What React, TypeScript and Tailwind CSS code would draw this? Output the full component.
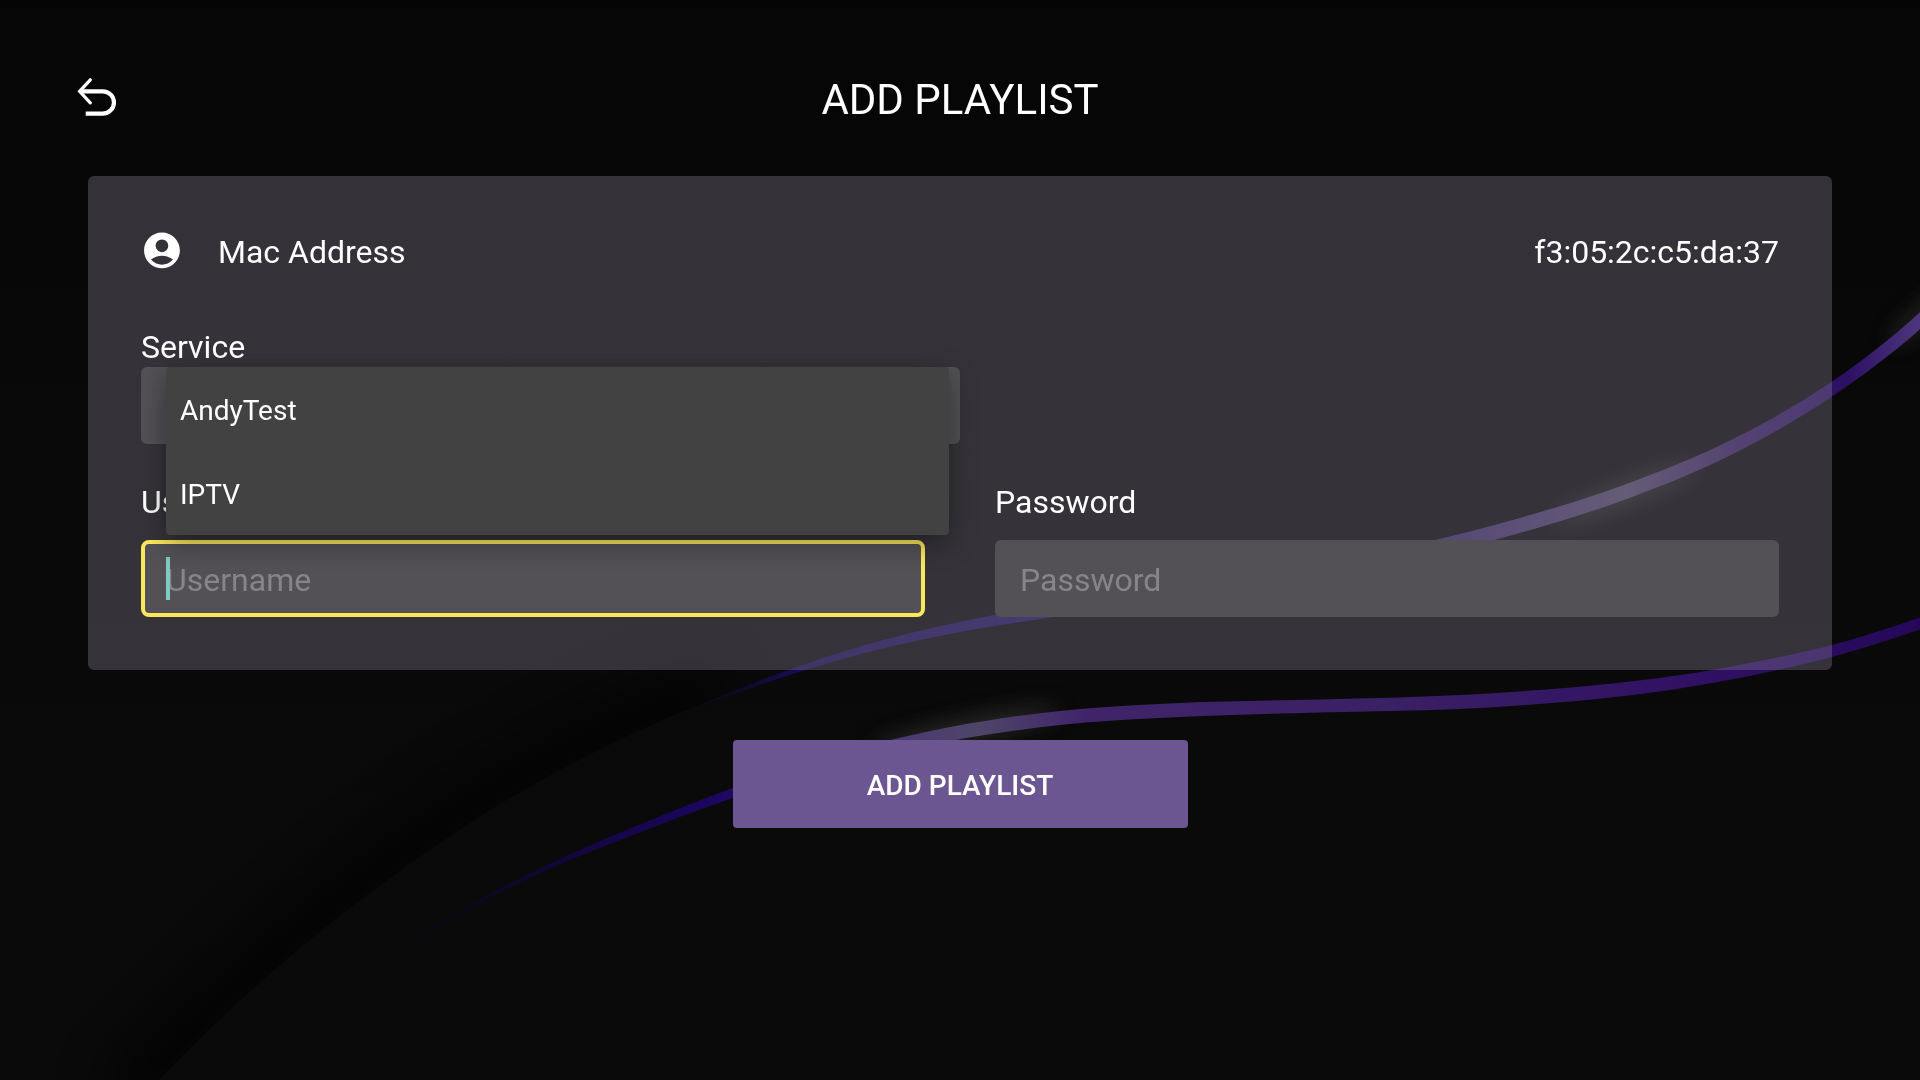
import React, { useState } from 'react';

const SERVICES = ['AndyTest', 'IPTV'];

// x, y of the centre line and the vertical thickness there
type RibbonPoint = [number, number, number];

const UPPER_RIBBON: RibbonPoint[] = [
  [690, 709, 1],
  [779, 676, 5],
  [865, 649, 8],
  [950, 629, 10],
  [1040, 613, 12],
  [1170, 595, 13],
  [1310, 573, 14],
  [1420, 551, 15],
  [1525, 524, 15],
  [1628, 491, 15],
  [1732, 447, 15],
  [1832, 389, 15],
  [1925, 316, 17],
  [2005, 228, 17],
];

const LOWER_RIBBON: RibbonPoint[] = [
  [377, 965, 1],
  [457, 914, 3],
  [546, 868, 5],
  [636, 830, 8],
  [733, 793, 10],
  [830, 762, 12],
  [945, 735, 14],
  [1060, 718, 14],
  [1180, 710, 14],
  [1320, 706, 13],
  [1460, 702, 14],
  [1597, 692, 14],
  [1715, 676, 13],
  [1832, 651, 12],
  [1925, 622, 12],
];

const smooth = (pts: number[][]) =>
  pts
    .slice(1)
    .map((p, i) => {
      const before = pts[i - 1] || pts[i];
      const from = pts[i];
      const after = pts[i + 2] || p;
      const c1 = [from[0] + (p[0] - before[0]) / 6, from[1] + (p[1] - before[1]) / 6];
      const c2 = [p[0] - (after[0] - from[0]) / 6, p[1] - (after[1] - from[1]) / 6];
      return `C${c1.join(' ')} ${c2.join(' ')} ${p.join(' ')}`;
    })
    .join('');

const ribbon = (points: RibbonPoint[]) => {
  const top = points.map(([x, y, w]) => [x, y - w / 2]);
  const bottom = points.map(([x, y, w]) => [x, y + w / 2]).reverse();
  return `M${top[0].join(' ')}${smooth(top)}L${bottom[0].join(' ')}${smooth(bottom)}Z`;
};

const Backdrop: React.FC = () => (
  <svg
    className="absolute inset-0 w-full h-full"
    viewBox="0 0 1920 1080"
    preserveAspectRatio="none"
    aria-hidden="true"
  >
    <defs>
      <linearGradient id="base" x1="0" y1="0" x2="0" y2="1">
        <stop offset="0" stopColor="#050505" />
        <stop offset="0.4" stopColor="#090909" />
        <stop offset="1" stopColor="#0a0a0a" />
      </linearGradient>
      <linearGradient id="upper" gradientUnits="userSpaceOnUse" x1="690" y1="0" x2="1920" y2="0">
        <stop offset="0" stopColor="#150540" stopOpacity="0" />
        <stop offset="0.08" stopColor="#1a0a50" />
        <stop offset="0.25" stopColor="#231259" />
        <stop offset="0.62" stopColor="#3c2a66" />
        <stop offset="0.76" stopColor="#524768" />
        <stop offset="0.85" stopColor="#38215f" />
        <stop offset="0.94" stopColor="#2c0f63" />
        <stop offset="1" stopColor="#4d377c" />
      </linearGradient>
      <linearGradient id="lower" gradientUnits="userSpaceOnUse" x1="377" y1="0" x2="1920" y2="0">
        <stop offset="0" stopColor="#0c0430" stopOpacity="0" />
        <stop offset="0.12" stopColor="#12063c" />
        <stop offset="0.22" stopColor="#1c0660" />
        <stop offset="0.34" stopColor="#4b3a72" />
        <stop offset="0.39" stopColor="#4e4568" />
        <stop offset="0.46" stopColor="#40246a" />
        <stop offset="0.65" stopColor="#3a2065" />
        <stop offset="0.85" stopColor="#301163" />
        <stop offset="1" stopColor="#25085a" />
      </linearGradient>
      <filter id="glow" x="-50%" y="-200%" width="200%" height="500%">
        <feGaussianBlur stdDeviation="11" />
      </filter>
      <filter id="shade" x="-20%" y="-20%" width="140%" height="140%">
        <feGaussianBlur stdDeviation="24" />
      </filter>
      <clipPath id="ridge">
        <path d="M140 1100C260 972 370 887 490 810C590 750 680 708 779 676L779 400H0V1100Z" />
      </clipPath>
    </defs>
    <rect width="1920" height="1080" fill="url(#base)" />
    <g clipPath="url(#ridge)">
      <path
        d="M120 1100C240 972 350 882 475 800C570 742 650 710 720 686"
        fill="none"
        stroke="#020202"
        strokeWidth="60"
        opacity="0.65"
        filter="url(#shade)"
      />
    </g>
    <g filter="url(#glow)" fill="#6b6963">
      <ellipse cx="1625" cy="494" rx="75" ry="8" opacity="0.4" transform="rotate(-21 1625 494)" />
      <ellipse cx="965" cy="730" rx="95" ry="9" opacity="0.4" transform="rotate(-12 965 730)" />
      <ellipse cx="1925" cy="314" rx="45" ry="8" opacity="0.35" transform="rotate(-40 1925 314)" />
    </g>
    <path d={ribbon(UPPER_RIBBON)} fill="url(#upper)" />
    <path d={ribbon(LOWER_RIBBON)} fill="url(#lower)" />
  </svg>
);

const BackIcon: React.FC = () => (
  <svg className="w-11 h-11" viewBox="0 0 44 44" fill="none" stroke="currentColor" aria-hidden="true">
    <path d="M14.3 1.8L3.6 13.3L14.3 24.8" strokeWidth="3.2" strokeLinecap="round" />
    <path d="M4 13.3H26.8A11.1 11.1 0 0 1 26.8 35.6H9.7" strokeWidth="4.2" />
  </svg>
);

const AccountIcon: React.FC = () => (
  <svg className="w-[43px] h-[43px]" viewBox="0.3 1.2 24 24" fill="currentColor" aria-hidden="true">
    <path d="M12 2C6.48 2 2 6.48 2 12s4.48 10 10 10 10-4.48 10-10S17.52 2 12 2zm0 4c1.93 0 3.5 1.57 3.5 3.5S13.93 13 12 13s-3.5-1.57-3.5-3.5S10.07 6 12 6zm0 14c-2.03 0-4.43-.82-6.14-2.88a9.947 9.947 0 0 1 12.28 0C16.43 19.18 14.03 20 12 20z" />
  </svg>
);

const App: React.FC = () => {
  const [service, setService] = useState(SERVICES[0]);
  const [username, setUsername] = useState('');
  const [password, setPassword] = useState('');

  return (
    <div className="relative min-h-screen overflow-hidden bg-[#090909] text-white font-[Roboto,sans-serif]">
      <Backdrop />

      <div className="relative">
        <header className="grid grid-cols-[1fr_auto_1fr] items-center px-[76px] pt-[70px] pb-[46px]">
          <button type="button" aria-label="Back" className="w-11 h-11">
            <BackIcon />
          </button>
          <h1 className="text-[42px] leading-[60px]">ADD PLAYLIST</h1>
        </header>

        <form onSubmit={(e) => e.preventDefault()}>
          <div className="mx-[88px] px-[53px] pt-[54px] pb-[53px] rounded-md bg-[#8a8394]/35">
            <div className="flex items-center justify-between h-11 text-[32px]">
              <div className="flex items-center gap-[34px]">
                <AccountIcon />
                <span>Mac Address</span>
              </div>
              <span>f3:05:2c:c5:da:37</span>
            </div>

            <div className="mt-[53px]">
              <label htmlFor="service" className="block text-[32px] leading-10">Service</label>
              <div className="relative w-1/2">
                <select
                  id="service"
                  value={service}
                  onChange={(e) => setService(e.target.value)}
                  className="block w-full h-[77px] px-[25px] rounded-md appearance-none bg-[#545156] text-transparent outline-none"
                >
                  {SERVICES.map((name) => (
                    <option key={name}>{name}</option>
                  ))}
                </select>
                <ul className="absolute z-10 top-0 left-[25px] right-[11px] rounded-sm bg-[#424242] shadow-[0_8px_28px_rgba(0,0,0,0.4)]">
                  {SERVICES.map((name) => (
                    <li key={name}>
                      <button
                        type="button"
                        onClick={() => setService(name)}
                        className="block w-full h-[84px] px-3.5 pt-1 text-left text-[28px]"
                      >
                        {name}
                      </button>
                    </li>
                  ))}
                </ul>
              </div>
            </div>

            <div className="mt-[38px] grid grid-cols-2 gap-[70px]">
              <div>
                <label htmlFor="username" className="block mb-[18px] text-[32px] leading-10">Username</label>
                <div className="relative">
                  <input
                    id="username"
                    type="text"
                    placeholder="Username"
                    value={username}
                    onChange={(e) => setUsername(e.target.value)}
                    className="block w-full h-[77px] px-[21px] pt-0.5 rounded-lg border-4 border-[#fde85c] bg-[#545156] text-[32px] placeholder:text-[#878589] caret-transparent outline-none"
                  />
                  <span className="absolute left-[25px] inset-y-[17px] w-1 bg-[#80cbc0]" />
                </div>
              </div>
              <div>
                <label htmlFor="password" className="block mb-[18px] text-[32px] leading-10">Password</label>
                <input
                  id="password"
                  type="password"
                  placeholder="Password"
                  value={password}
                  onChange={(e) => setPassword(e.target.value)}
                  className="block w-full h-[77px] px-[25px] pt-0.5 rounded-md bg-[#545156] text-[32px] placeholder:text-[#878589] outline-none"
                />
              </div>
            </div>
          </div>

          <button
            type="submit"
            className="block mx-auto mt-[70px] w-[455px] h-[88px] pt-1 rounded bg-[#6c5691] text-[28px] font-medium"
          >
            ADD PLAYLIST
          </button>
        </form>
      </div>
    </div>
  );
};

export default App;
